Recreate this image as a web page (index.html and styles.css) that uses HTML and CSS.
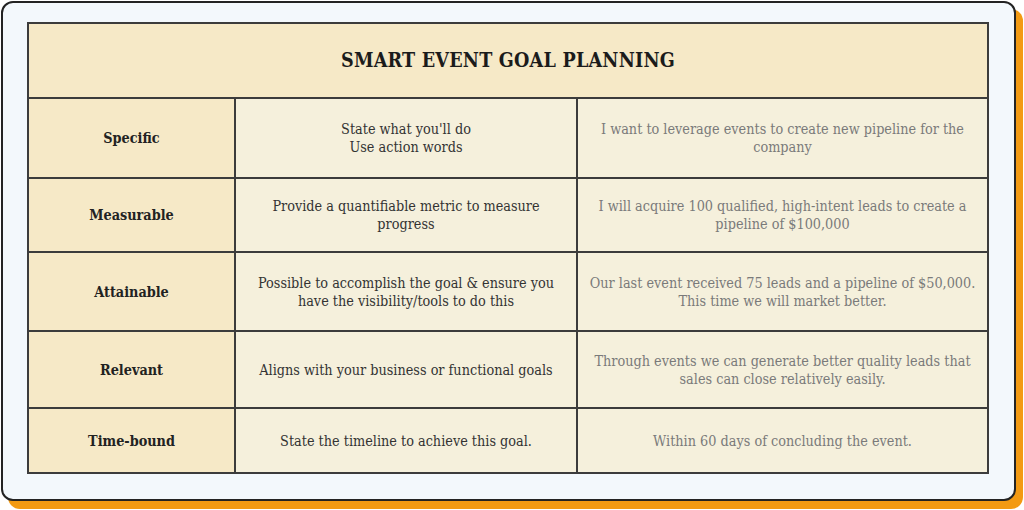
FILE: index.html
```html
<!DOCTYPE html>
<html lang="en">
<head>
<meta charset="utf-8">
<title>SMART Event Goal Planning</title>
<link rel="stylesheet" href="styles.css">
</head>
<body>
<div class="card">
  <div class="table">
    <div class="cell title">SMART EVENT GOAL PLANNING</div>

    <div class="cell key">Specific</div>
    <div class="cell desc">State what you'll do<br>Use action words</div>
    <div class="cell example">I want to leverage events to create new pipeline for the company</div>

    <div class="cell key">Measurable</div>
    <div class="cell desc">Provide a quantifiable metric to measure progress</div>
    <div class="cell example">I will acquire 100 qualified, high-intent leads to create a pipeline of $100,000</div>

    <div class="cell key">Attainable</div>
    <div class="cell desc">Possible to accomplish the goal &amp; ensure you have the visibility/tools to do this</div>
    <div class="cell example">Our last event received 75 leads and a pipeline of $50,000. This time we will market better.</div>

    <div class="cell key">Relevant</div>
    <div class="cell desc">Aligns with your business or functional goals</div>
    <div class="cell example">Through events we can generate better quality leads that sales can close relatively easily.</div>

    <div class="cell key">Time-bound</div>
    <div class="cell desc">State the timeline to achieve this goal.</div>
    <div class="cell example">Within 60 days of concluding the event.</div>
  </div>
</div>
</body>
</html>
```

FILE: styles.css
```css
html, body {
  margin: 0;
  padding: 0;
  background: #ffffff;
}
body {
  width: 1024px;
  height: 510px;
  overflow: hidden;
  font-family: "DejaVu Serif Condensed", "DejaVu Serif", serif;
}
.card {
  margin: 1px 0 0 1px;
  width: 1015px;
  height: 500px;
  box-sizing: border-box;
  border: 2px solid #232323;
  border-radius: 12px;
  background: #f3f8fc;
  box-shadow: 7px 8px 0 0 #f39a12;
  padding: 19px 25px 24px 24px;
}
.table {
  display: grid;
  grid-template-columns: 205px 340px 1fr;
  grid-template-rows: 73px 78px 72px 77px 75px 63px;
  gap: 2px;
  padding: 2px;
  background: #3c3c3c;
  height: 452px;
  box-sizing: border-box;
}
.cell {
  display: flex;
  align-items: center;
  justify-content: center;
  text-align: center;
  font-size: 14.3px;
  line-height: 18px;
  padding: 0 12px;
  background: #f5f0dc;
}
.title {
  grid-column: 1 / -1;
  background: #f6e9c7;
  font-size: 19.6px;
  font-weight: 700;
  color: #1b1b1b;
  letter-spacing: 0.2px;
}
.key {
  background: #f6e9c7;
  font-weight: 700;
  color: #222222;
}
.desc {
  color: #333333;
}
.example {
  color: #7a7a7a;
  padding: 0 6px;
}
```
